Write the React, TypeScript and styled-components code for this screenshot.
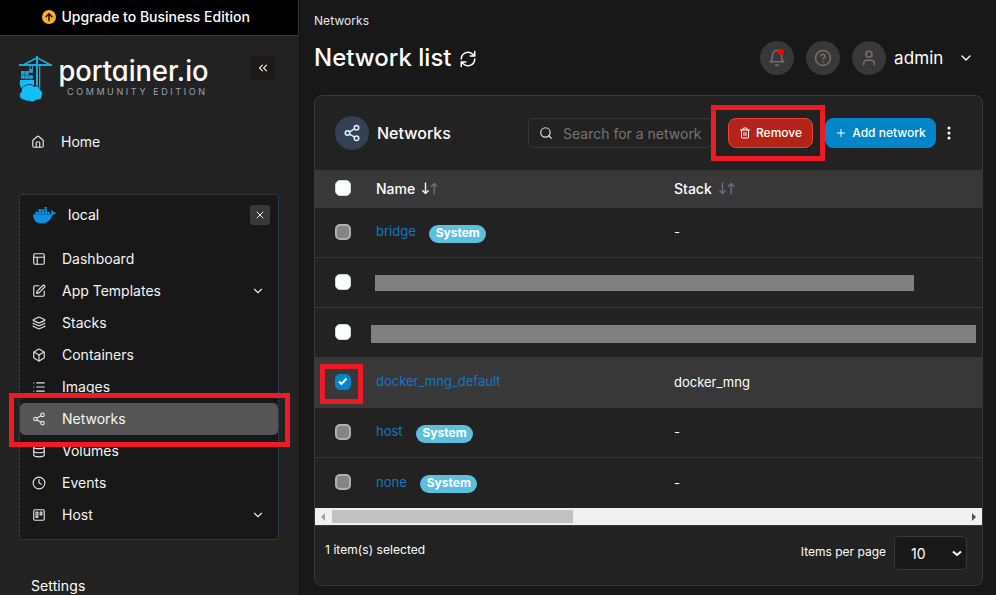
import React from 'react';
import styled, { createGlobalStyle, css } from 'styled-components';
import {
  Box,
  ChevronDown,
  ChevronsLeft,
  CircleQuestionMark,
  Clock,
  Database,
  House,
  Layers,
  List,
  PanelsTopLeft,
  Plus,
  Search,
  Share2,
  SquarePen,
  Trash2,
  Trello,
  User,
  X,
} from 'lucide-react';

const GlobalStyle = createGlobalStyle`
  * { box-sizing: border-box; }
  body {
    margin: 0;
    background: #181818;
    color: #fff;
    font-family: Inter, 'Liberation Sans', sans-serif;
    font-size: 14px;
    overflow: hidden;
  }
`;

const Page = styled.div`
  position: relative;
  display: flex;
  width: 996px;
  height: 595px;
  overflow: hidden;
`;

const Sidebar = styled.aside`
  width: 300px;
  flex: none;
  background: #222;
  border-right: 1px solid #121212;
`;

const Banner = styled.div`
  display: flex;
  align-items: center;
  height: 36px;
  padding: 0 0 2px 42px;
  gap: 5.5px;
  background: #000;
  border-bottom: 1px solid #383838;
  border-right: 1px solid #383838;
  font-weight: 500;
`;

const BrandRow = styled.div`
  display: flex;
  height: 90px;
  padding: 20px 24px 0 16px;
  justify-content: space-between;
`;

const Collapse = styled.button`
  display: grid;
  place-items: center;
  width: 24px;
  height: 24px;
  padding: 0;
  border: 0;
  border-radius: 4px;
  background: #1c1917;
  color: #e5e5e5;
`;

const NavRow = styled.a<{ $active?: boolean; $home?: boolean }>`
  display: flex;
  align-items: center;
  height: 32px;
  padding: 0 13px 0 12px;
  border-radius: 5px;
  color: #f5f5f5;
  line-height: 20px;
  ${(p) => p.$active && css`background: #555;`}
  ${(p) => p.$home && css`margin-left: 19px;`}

  svg { flex: none; color: #e2e2e2; }
  span { flex: 1; margin-left: 16px; }
`;

const EnvBox = styled.section`
  width: 260px;
  height: 346px;
  margin: 36px 0 0 19px;
  border: 1px dotted #4b5366;
  border-radius: 4px;
  background: #181818;
`;

const EnvHeader = styled.div`
  display: flex;
  align-items: center;
  height: 40px;
  margin-bottom: 8px;
  padding: 0 8px 0 13px;
  span { flex: 1; margin: -1px 0 0 12px; }
`;

const Close = styled.button`
  display: grid;
  place-items: center;
  width: 20px;
  height: 20px;
  padding: 0;
  border: 0;
  border-radius: 3px;
  background: #383838;
  color: #eee;
`;

const SettingsTitle = styled.div`
  margin: 36px 0 0 31px;
  line-height: 20px;
  letter-spacing: 0.1px;
`;

const Main = styled.main`
  flex: 1;
  min-width: 0;
  padding: 12px 13px 0 14px;
`;

const Crumb = styled.div`
  height: 18px;
  line-height: 18px;
  font-size: 12px;
  letter-spacing: 0.08px;
  color: #e7e7e7;
`;

const Heading = styled.header`
  display: flex;
  align-items: center;
  height: 34px;
  margin: 11px 0 20px;
  padding-right: 9px;
  h1 {
    flex: none;
    margin: 0 8px 0 0;
    font-size: 24px;
    line-height: 32px;
    font-weight: 500;
  }
  & > svg { margin-top: 2px; }
`;

const UserTools = styled.div`
  display: flex;
  align-items: center;
  margin-left: auto;
`;

const RoundIcon = styled.span<{ $tone?: 'blue' }>`
  position: relative;
  display: grid;
  place-items: center;
  width: 34px;
  height: 34px;
  flex: none;
  border-radius: 50%;
  margin-right: ${(p) => (p.$tone ? 8 : 12)}px;
  background: ${(p) => (p.$tone ? '#344054' : '#383838')};
  color: ${(p) => (p.$tone ? '#e0f2fe' : '#78716c')};
`;

const AlertDot = styled.i`
  position: absolute;
  top: 8px;
  left: 18px;
  width: 6px;
  height: 6px;
  border-radius: 50%;
  background: #f00;
`;

const UserName = styled.span`
  width: 64px;
  margin-left: -4px;
  font-size: 17px;
  line-height: 24px;
  letter-spacing: 0.1px;
`;

const Card = styled.section`
  width: 669px;
  height: 491px;
  border: 1px solid #383838;
  border-radius: 8px;
  background: #222;
`;

const Toolbar = styled.div`
  display: flex;
  align-items: center;
  height: 74px;
  padding-left: 20px;
  h2 {
    width: 151px;
    margin: 0;
    font-size: 16px;
    font-weight: 500;
  }
`;

const SearchBox = styled.div`
  display: flex;
  align-items: center;
  width: 184px;
  height: 30px;
  margin-right: 16px;
  padding-left: 10px;
  gap: 10px;
  border: 1px solid #383838;
  border-radius: 5px;
  color: #e0e0e0;
  white-space: nowrap;
  span { color: #757575; }
`;

const Action = styled.button<{ $danger?: boolean }>`
  display: flex;
  align-items: center;
  justify-content: center;
  width: ${(p) => (p.$danger ? 85 : 111)}px;
  height: 30px;
  margin-right: ${(p) => (p.$danger ? 12 : 11)}px;
  padding: 0 0 1px;
  gap: 5px;
  border: 1px solid ${(p) => (p.$danger ? '#f04438' : '#0086c9')};
  border-radius: 8px;
  background: ${(p) => (p.$danger ? '#b42318' : '#0086c9')};
  color: #fff;
  font: 500 12px Inter, sans-serif;
  white-space: nowrap;
`;

const TableRow = styled.div<{ $head?: boolean; $selected?: boolean; $last?: boolean }>`
  display: grid;
  grid-template-columns: 61px 298px 1fr;
  align-items: center;
  height: ${(p) => (p.$head ? 38 : 50)}px;
  background: ${(p) => (p.$head || p.$selected ? '#383838' : '#222')};
  border-bottom: ${(p) => (p.$head || p.$last ? 0 : 1)}px solid #383838;
  font-size: ${(p) => (p.$head ? 14 : 13)}px;
  font-weight: ${(p) => (p.$head ? 500 : 400)};
`;

const Check = styled.span<{ $state: 'empty' | 'checked' | 'disabled' }>`
  display: grid;
  place-items: center;
  width: 16px;
  height: 16px;
  margin: 0 0 2px 20px;
  border-radius: 5px;
  border: ${(p) => (p.$state === 'disabled' ? '2px solid #b0b0b0' : '1px solid #d0d5dd')};
  background: ${(p) => (p.$state === 'disabled' ? '#858585' : '#fff')};
  ${(p) => p.$state === 'checked' && css`
    border-color: #0086c9;
    background: #0086c9;
  `}
`;

const HeadLabel = styled.span`
  display: flex;
  align-items: center;
  gap: 7px;
  padding-bottom: 1px;
`;

const StackCell = styled.span`
  padding-bottom: 1px;
`;

const NameCell = styled.div`
  display: flex;
  align-items: center;
  gap: 13.500px;
  color: #1577c2;
  a { padding-bottom: 3px; }
`;

const Badge = styled.span`
  width: 57px;
  height: 18px;
  margin-top: 2px;
  border-radius: 9px;
  background: #5bc0de;
  color: #fff;
  font-size: 12px;
  line-height: 15px;
  font-weight: 700;
  text-align: center;
`;

const Redacted = styled.div<{ $wide?: boolean }>`
  grid-column: 2 / 4;
  width: ${(p) => (p.$wide ? 605 : 539)}px;
  height: ${(p) => (p.$wide ? 18 : 16)}px;
  margin: ${(p) => (p.$wide ? '3px 0 0 -5px' : '1px 0 0 -1px')};
  background: #808080;
`;

const Scrollbar = styled.div`
  display: flex;
  align-items: center;
  height: 17px;
  padding: 0 6px;
  background: #f0f0f0;
`;

const ScrollThumb = styled.div`
  width: 241px;
  height: 13px;
  margin: 0 auto 0 7px;
  background: #c1c1c1;
`;

const Footer = styled.div`
  display: flex;
  justify-content: space-between;
  height: 60px;
  padding: 10px 15px 0 10px;
  border-top: 1px solid #383838;
  font-size: 12px;
`;

const Selected = styled.span`
  padding-top: 6px;
  line-height: 15px;
  letter-spacing: 0.06px;
`;

const Paging = styled.div`
  display: flex;
  height: 34px;
  gap: 8px;
  & > span { margin-top: 8px; line-height: 16px; }
`;

const PageSize = styled.div`
  display: flex;
  align-items: center;
  justify-content: space-between;
  width: 73px;
  height: 34px;
  padding: 0 4px 0 16px;
  border: 1px solid #383838;
  border-radius: 5px;
  background: #181818;
  font-size: 14px;
`;

/* Annotation frames lie over the page without affecting its flow. */
const Highlight = styled.div<{ $x: number; $y: number; $w: number; $h: number }>`
  position: absolute;
  left: ${(p) => p.$x}px;
  top: ${(p) => p.$y}px;
  width: ${(p) => p.$w}px;
  height: ${(p) => p.$h}px;
  border: 5px solid #ed1c24;
  pointer-events: none;
`;

const LogoArt = styled.svg`
  overflow: visible;
`;

const LogoText = styled.text`
  font-family: Inter, sans-serif;
  font-feature-settings: 'cv11';
`;

function Logo() {
  return (
    <LogoArt width="196" height="52" viewBox="0 0 196 52">
      <g fill="#1ba9dd">
        <path d="M20 0h2v33h-2zM3 8h33v2H3zM23 10h1.300v22H23z" />
        <path d="M20.500 2 8 8.500M21.500 2 34 8.500" fill="none" stroke="#1ba9dd" strokeWidth="1.500" />
        <path d="M5 15h3.700v3.700H5zM9.100 15h3.700v3.700H9.100zM5 19.200h3.700v3.600H5zM9.100 19.200h3.700v3.600H9.100zM13.200 19.200h3.700v3.600h-3.700zM13.200 13h3.700v3.700h-3.700zM13.500 9h1v4h-1zM16 9h.900v4h-.9z" />
      </g>
      <g fill="#13bef9">
        <path d="M4 24h14v6l-3 3H6q-3-3-2-9z" />
        <path d="M8 44a4.700 4.700 0 0 1-2.500-8.500 5 5 0 0 1 4.500-6 6 6 0 0 1 8 1q5-2 6.500 3.500a4 4 0 0 1 1.500 5.500q0 5-5.500 4.500-4 3.500-8 1-2 .500-4.500-1z" stroke="#222" strokeWidth=".8" />
      </g>
      <LogoText x="42.500" y="25" fill="#fff" fontSize="28" fontWeight="500" textLength="150" lengthAdjust="spacingAndGlyphs">portainer.io</LogoText>
      <LogoText x="51" y="38.500" fill="#98a2b3" fontSize="9" textLength="138" lengthAdjust="spacing">COMMUNITY EDITION</LogoText>
    </LogoArt>
  );
}

function UpgradeIcon() {
  return (
    <svg width="14" height="14" viewBox="0 0 14 14">
      <circle cx="7" cy="7" r="7" fill="#fdb022" />
      <path d="M7 10.500V4M4 6.800 7 3.800l3 3" fill="none" stroke="#171717" strokeWidth="1.500" strokeLinecap="round" strokeLinejoin="round" />
    </svg>
  );
}

function Whale() {
  return (
    <svg width="23" height="17" viewBox="0 0 23 17" fill="#0b91e3">
      <path d="M0 7.300h16.700q1.600-.2 2-1.200-1.200-1.800-.2-3.300 1.500.9 1.800 2.300 1.600-.2 2.700.6-.8 2-3.600 2Q16.700 16.500 8.700 16.500 0 16.500 0 7.300z" />
      <path d="M2.300 4.700H5V7H2.300zM5.400 4.700H8V7H5.400zM8.400 4.700H11V7H8.400zM11.400 4.700H14V7h-2.600zM14.400 4.700h2.400V7h-2.400zM5.400 2.200H8v2.200H5.400zM8.400 2.200H11v2.200H8.400zM11.400 2.200H14v2.200h-2.600zM11.400 0H14v1.800h-2.600z" />
    </svg>
  );
}

function Tick() {
  return (
    <svg width="10" height="9" viewBox="0 0 10 9">
      <path d="m1 4.500 2.500 2.500L8.500 1.500" fill="none" stroke="#fff" strokeWidth="2" />
    </svg>
  );
}

function Refresh() {
  return (
    <svg width="18" height="18" viewBox="0 0 24 24" fill="none" stroke="#fff" strokeWidth="2" strokeLinecap="round" strokeLinejoin="round">
      <path d="M21 2v6h-6M3 12a9 9 0 0 1 15-6.700L21 8M3 22v-6h6M21 12a9 9 0 0 1-15 6.700L3 16" />
    </svg>
  );
}

function BellIcon() {
  return (
    <svg width="18" height="18" viewBox="0 0 24 24" fill="none" stroke="currentColor" strokeWidth="2" strokeLinecap="round" strokeLinejoin="round">
      <path d="M18 8A6 6 0 0 0 6 8c0 7-3 9-3 9h18s-3-2-3-9M13.730 21a2 2 0 0 1-3.460 0" />
    </svg>
  );
}

const Dots = () => (
  <svg width="4" height="14" viewBox="0 0 4 14" fill="#fff">
    <circle cx="2" cy="2" r="1.500" /><circle cx="2" cy="7" r="1.500" /><circle cx="2" cy="12" r="1.500" />
  </svg>
);

const Sort = ({ sorted = false }: { sorted?: boolean }) => (
  <svg width="16" height="13" viewBox="0 0 16 13" fill="none" strokeWidth="1.400" strokeLinecap="round" strokeLinejoin="round">
    <path d="M3.500 1v10.500M.8 8.800l2.700 2.700 2.700-2.700" stroke={sorted ? '#f2f2f2' : '#667085'} />
    <path d="M12.200 12V1.500M9.500 4.200l2.700-2.700 2.700 2.700" stroke="#667085" />
  </svg>
);

const navItems = [
  { label: 'Dashboard', Icon: PanelsTopLeft },
  { label: 'App Templates', Icon: SquarePen, expands: true },
  { label: 'Stacks', Icon: Layers },
  { label: 'Containers', Icon: Box },
  { label: 'Images', Icon: List },
  { label: 'Networks', Icon: Share2, active: true },
  { label: 'Volumes', Icon: Database },
  { label: 'Events', Icon: Clock },
  { label: 'Host', Icon: Trello, expands: true },
];

function NetworkRow({ name, stack = '-', selected = false, last = false }: { name: string; stack?: string; selected?: boolean; last?: boolean }) {
  return (
    <TableRow $selected={selected} $last={last}>
      <Check $state={selected ? 'checked' : 'disabled'}>{selected && <Tick />}</Check>
      <NameCell><a>{name}</a>{!selected && <Badge>System</Badge>}</NameCell>
      <StackCell>{stack}</StackCell>
    </TableRow>
  );
}

export default function App() {
  return (
    <Page>
      <GlobalStyle />
      <Sidebar>
        <Banner><UpgradeIcon />Upgrade to Business Edition</Banner>
        <BrandRow>
          <Logo />
          <Collapse><ChevronsLeft size={14} /></Collapse>
        </BrandRow>
        <NavRow $home><House size={14} /><span>Home</span></NavRow>
        <EnvBox>
          <EnvHeader><Whale /><span>local</span><Close><X size={12} /></Close></EnvHeader>
          {navItems.map(({ label, Icon, expands, active }) => (
            <NavRow key={label} $active={active}>
              <Icon size={14} />
              <span>{label}</span>
              {expands && <ChevronDown size={14} />}
            </NavRow>
          ))}
        </EnvBox>
        <SettingsTitle>Settings</SettingsTitle>
      </Sidebar>
      <Main>
        <Crumb>Networks</Crumb>
        <Heading>
          <h1>Network list</h1>
          <Refresh />
          <UserTools>
            <RoundIcon><BellIcon /><AlertDot /></RoundIcon>
            <RoundIcon><CircleQuestionMark size={18} /></RoundIcon>
            <RoundIcon><User size={18} /></RoundIcon>
            <UserName>admin</UserName>
            <ChevronDown size={16} />
          </UserTools>
        </Heading>
        <Card>
          <Toolbar>
            <RoundIcon $tone="blue"><Share2 size={18} /></RoundIcon>
            <h2>Networks</h2>
            <SearchBox><Search size={14} /><span>Search for a network</span></SearchBox>
            <Action $danger><Trash2 size={12} />Remove</Action>
            <Action><Plus size={12} />Add network</Action>
            <Dots />
          </Toolbar>
          <TableRow $head>
            <Check $state="empty" />
            <HeadLabel>Name<Sort sorted /></HeadLabel>
            <HeadLabel>Stack<Sort /></HeadLabel>
          </TableRow>
          <NetworkRow name="bridge" />
          <TableRow><Check $state="empty" /><Redacted /></TableRow>
          <TableRow><Check $state="empty" /><Redacted $wide /></TableRow>
          <NetworkRow name="docker_mng_default" stack="docker_mng" selected />
          <NetworkRow name="host" />
          <NetworkRow name="none" last />
          <Scrollbar>
            <svg width="4" height="8" viewBox="0 0 4 8"><path d="M4 0v8L0 4z" fill="#a3a3a3" /></svg>
            <ScrollThumb />
            <svg width="4" height="8" viewBox="0 0 4 8"><path d="M0 0v8l4-4z" fill="#505050" /></svg>
          </Scrollbar>
          <Footer>
            <Selected>1 item(s) selected</Selected>
            <Paging>
              <span>Items per page</span>
              <PageSize>10<svg width="10" height="7" viewBox="0 0 10 7"><path d="m1 1.500 4 3.500 4-3.500" stroke="#fff" strokeWidth="2" fill="none" /></svg></PageSize>
            </Paging>
          </Footer>
        </Card>
      </Main>
      <Highlight $x={9} $y={393} $w={281} $h={54} />
      <Highlight $x={711} $y={105} $w={114} $h={56} />
      <Highlight $x={320} $y={364} $w={43} $h={40} />
    </Page>
  );
}
